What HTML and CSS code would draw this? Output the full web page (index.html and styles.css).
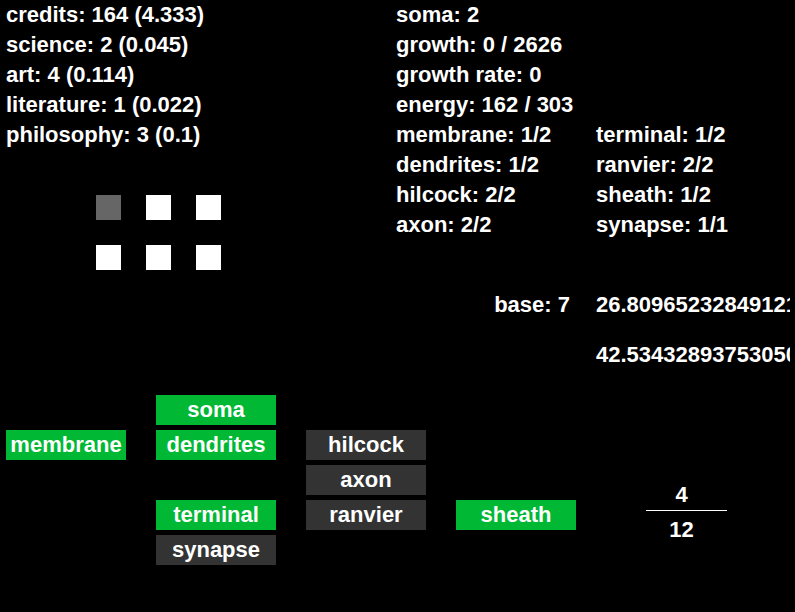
FILE: index.html
```html
<!DOCTYPE html>
<html>
<head>
<meta charset="utf-8">
<link rel="stylesheet" href="styles.css">
</head>
<body>
<div class="top">
  <div class="left">
    <div class="stats">
      <div class="line">credits: 164 (4.333)</div>
      <div class="line">science: 2 (0.045)</div>
      <div class="line">art: 4 (0.114)</div>
      <div class="line">literature: 1 (0.022)</div>
      <div class="line">philosophy: 3 (0.1)</div>
    </div>
    <div class="squares">
      <div class="sq dim"></div>
      <div class="sq"></div>
      <div class="sq"></div>
      <div class="sq"></div>
      <div class="sq"></div>
      <div class="sq"></div>
    </div>
  </div>
  <div class="right">
    <div class="line">soma: 2</div>
    <div class="line">growth: 0 / 2626</div>
    <div class="line">growth rate: 0</div>
    <div class="line">energy: 162 / 303</div>
    <div class="parts">
      <div class="line">membrane: 1/2</div>
      <div class="line">terminal: 1/2</div>
      <div class="line">dendrites: 1/2</div>
      <div class="line">ranvier: 2/2</div>
      <div class="line">hilcock: 2/2</div>
      <div class="line">sheath: 1/2</div>
      <div class="line">axon: 2/2</div>
      <div class="line">synapse: 1/1</div>
    </div>
    <div class="base">
      <div class="line base-label">base: 7</div>
      <div class="line num">26.809652328491211</div>
      <div class="line base-label"></div>
      <div class="line num">42.534328937530500</div>
    </div>
  </div>
</div>
<div class="bottom">
  <div class="cells">
    <div class="cell on c2 r1">soma</div>
    <div class="cell on c1 r2">membrane</div>
    <div class="cell on c2 r2">dendrites</div>
    <div class="cell off c3 r2">hilcock</div>
    <div class="cell off c3 r3">axon</div>
    <div class="cell on c2 r4">terminal</div>
    <div class="cell off c3 r4">ranvier</div>
    <div class="cell on c4 r4">sheath</div>
    <div class="cell off c2 r5">synapse</div>
  </div>
  <div class="fraction">
    <div class="numer">4</div>
    <div class="denom">12</div>
  </div>
</div>
</body>
</html>
```
FILE: styles.css
```css
html, body {
  margin: 0;
  padding: 0;
  background: #000;
  color: #fff;
  overflow: hidden;
  width: 795px;
  height: 612px;
}
body {
  font-family: "Liberation Sans", Arial, sans-serif;
  font-weight: bold;
  font-size: 22px;
}
.line {
  height: 30px;
  line-height: 30px;
  white-space: nowrap;
}
.top {
  display: flex;
  height: 370px;
}
.left {
  width: 384px;
  flex: none;
  padding-left: 6px;
}
.squares {
  margin-top: 45px;
  margin-left: 90px;
  display: grid;
  grid-template-columns: repeat(3, 25px);
  grid-auto-rows: 25px;
  gap: 25px;
}
.sq { background: #fff; }
.sq.dim { background: #666; }
.right {
  width: 399px;
  flex: none;
  padding-left: 6px;
}
.parts {
  display: grid;
  grid-template-columns: 200px 200px;
}
.base {
  margin-top: 50px;
  margin-left: -6px;
  display: grid;
  grid-template-columns: 200px 200px;
  grid-template-rows: 30px 30px;
  row-gap: 20px;
}
.base-label {
  text-align: right;
  padding-right: 20px;
}
.num {
  padding-left: 6px;
  overflow: hidden;
}
.bottom {
  display: flex;
  margin-top: 25px;
}
.cells {
  margin-left: 6px;
  display: grid;
  grid-template-columns: repeat(4, 120px);
  grid-template-rows: repeat(5, 30px);
  column-gap: 30px;
  row-gap: 5px;
}
.cell {
  text-align: center;
  line-height: 30px;
  height: 30px;
}
.cell.on { background: #00b833; }
.cell.off { background: #333; }
.c1 { grid-column: 1; }
.c2 { grid-column: 2; }
.c3 { grid-column: 3; }
.c4 { grid-column: 4; }
.r1 { grid-row: 1; }
.r2 { grid-row: 2; }
.r3 { grid-row: 3; }
.r4 { grid-row: 4; }
.r5 { grid-row: 5; }
.fraction {
  margin-left: 70px;
  margin-top: 85px;
  width: 81px;
}
.numer, .denom {
  height: 30px;
  line-height: 30px;
  text-align: center;
  padding-right: 10px;
}
.numer {
  border-bottom: 1px solid #fff;
  line-height: 29px;
}
.denom { padding-top: 4px; }
```
